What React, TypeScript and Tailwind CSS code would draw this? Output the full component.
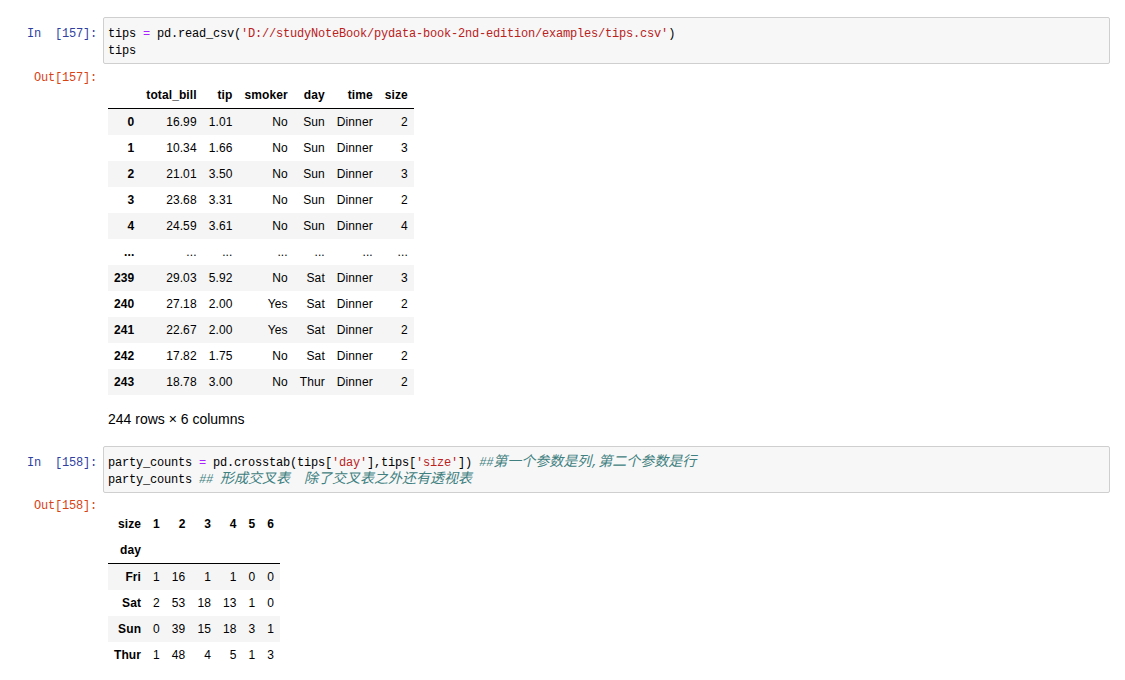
const mono = "font-['Liberation_Mono','Noto_Sans_CJK_SC',monospace] text-[12px] tracking-[-0.2px] leading-[17px]";

const tipsCols = ['total_bill', 'tip', 'smoker', 'day', 'time', 'size']

const tipsRows: string[][] = [
  ['0', '16.99', '1.01', 'No', 'Sun', 'Dinner', '2'],
  ['1', '10.34', '1.66', 'No', 'Sun', 'Dinner', '3'],
  ['2', '21.01', '3.50', 'No', 'Sun', 'Dinner', '3'],
  ['3', '23.68', '3.31', 'No', 'Sun', 'Dinner', '2'],
  ['4', '24.59', '3.61', 'No', 'Sun', 'Dinner', '4'],
  ['...', '...', '...', '...', '...', '...', '...'],
  ['239', '29.03', '5.92', 'No', 'Sat', 'Dinner', '3'],
  ['240', '27.18', '2.00', 'Yes', 'Sat', 'Dinner', '2'],
  ['241', '22.67', '2.00', 'Yes', 'Sat', 'Dinner', '2'],
  ['242', '17.82', '1.75', 'No', 'Sat', 'Dinner', '2'],
  ['243', '18.78', '3.00', 'No', 'Thur', 'Dinner', '2'],
]

const crossRows: string[][] = [
  ['Fri', '1', '16', '1', '1', '0', '0'],
  ['Sat', '2', '53', '18', '13', '1', '0'],
  ['Sun', '0', '39', '15', '18', '3', '1'],
  ['Thur', '1', '48', '4', '5', '1', '3'],
]

const cell = 'px-[6px] py-[6px] leading-[14px] text-right align-middle tracking-[0.1px]'

function Prompt({ kind, n }: { kind: 'in' | 'out'; n: number }) {
  return (
    <div className={`w-[103px] shrink-0 pr-[6px] text-right whitespace-pre ${mono} ${kind === 'in' ? 'pt-[9px] text-[#303F9F]' : 'text-[#D84315]'}`}>
      {kind === 'in' ? `In  [${n}]:` : `Out[${n}]:`}
    </div>
  )
}

function InputCell({ n, children }: { n: number; children: React.ReactNode }) {
  return (
    <div className="flex">
      <Prompt kind="in" n={n} />
      <div className={`w-[1007px] rounded-[2px] border border-[#cfcfcf] bg-[#f7f7f7] pl-[4px] pt-[8px] pb-[3px] whitespace-pre text-black ${mono}`}>
        {children}
      </div>
    </div>
  )
}

const Op = ({ c }: { c: string }) => <span className="text-[#AA22FF]">{c}</span>
const Str = ({ c }: { c: string }) => <span className="text-[#BA2121]">{c}</span>
// comments: latin bits stay in the mono font, the CJK runs use full 14px width
const Cmt = ({ parts }: { parts: string[] }) => (
  <span className="italic text-[#408080]">
    {parts.map((p, i) =>
      i % 2 === 0 ? (
        <span key={i}>{p}</span>
      ) : (
        <span key={i} className="text-[14px] leading-[0] tracking-normal">{p}</span>
      )
    )}
  </span>
)

export default function App() {
  return (
    <div className="w-[1125px] h-[680px] bg-white pt-[17px] font-['Liberation_Sans',Arial,sans-serif] text-black">
      <InputCell n={157}>
        <div>
          tips <Op c="=" /> pd.read_csv(<Str c="'D://studyNoteBook/pydata-book-2nd-edition/examples/tips.csv'" />)
        </div>
        <div>tips</div>
      </InputCell>

      <div className="mt-[6px] flex">
        <Prompt kind="out" n={157} />
        <div className="pl-[5px]">
          <table className="mt-[12px] border-collapse text-[12px]">
            <thead>
              <tr>
                <th className={`${cell} border-b border-black`}></th>
                {tipsCols.map((c) => (
                  <th key={c} className={`${cell} border-b border-black font-bold`}>{c}</th>
                ))}
              </tr>
            </thead>
            <tbody>
              {tipsRows.map((r, i) => (
                <tr key={i} className={i % 2 === 0 ? 'bg-[#f5f5f5]' : 'bg-white'}>
                  <th className={`${cell} font-bold`}>{r[0]}</th>
                  {r.slice(1).map((v, j) => (
                    <td key={j} className={cell}>{v}</td>
                  ))}
                </tr>
              ))}
            </tbody>
          </table>
          <p className="mt-[14px] text-[14px] leading-[20px]">244 rows × 6 columns</p>
        </div>
      </div>

      <div className="mt-[17px]">
        <InputCell n={158}>
          <div>
            party_counts <Op c="=" /> pd.crosstab(tips[<Str c="'day'" />],tips[<Str c="'size'" />]) <Cmt parts={['##', '第一个参数是列', ',', '第二个参数是行']} />
          </div>
          <div>
            party_counts <Cmt parts={['## ', '形成交叉表', '  ', '除了交叉表之外还有透视表']} />
          </div>
        </InputCell>
      </div>

      <div className="mt-[5px] flex">
        <Prompt kind="out" n={158} />
        <div className="pl-[5px]">
          <table className="mt-[13px] border-collapse text-[12px]">
            <thead>
              <tr>
                <th className={`${cell} font-bold`}>size</th>
                {['1', '2', '3', '4', '5', '6'].map((c) => (
                  <th key={c} className={`${cell} font-bold`}>{c}</th>
                ))}
              </tr>
              <tr>
                <th className={`${cell} border-b border-black font-bold`}>day</th>
                {['1', '2', '3', '4', '5', '6'].map((c) => (
                  <th key={c} className={`${cell} border-b border-black`}></th>
                ))}
              </tr>
            </thead>
            <tbody>
              {crossRows.map((r, i) => (
                <tr key={i} className={i % 2 === 0 ? 'bg-[#f5f5f5]' : 'bg-white'}>
                  <th className={`${cell} font-bold`}>{r[0]}</th>
                  {r.slice(1).map((v, j) => (
                    <td key={j} className={cell}>{v}</td>
                  ))}
                </tr>
              ))}
            </tbody>
          </table>
        </div>
      </div>
    </div>
  )
}
